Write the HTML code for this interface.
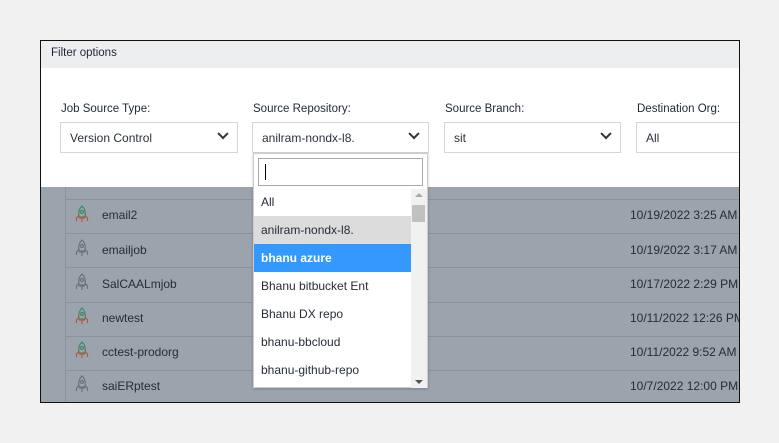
<!DOCTYPE html>
<html><head><style>
*{margin:0;padding:0;box-sizing:border-box}
body{width:779px;height:443px;background:#f1f1f1;font-family:"Liberation Sans",sans-serif;position:relative;overflow:hidden;color:#2b2f3a}
.frame{position:absolute;left:40px;top:40px;width:700px;height:363px;border:1px solid #111;background:#fff;overflow:hidden}
.hdr{position:absolute;left:0;top:0;width:698px;height:27px;background:#eceef0;font-size:11.5px;padding:6px 10px;color:#1f2736}
.ov{position:absolute;left:0;top:146px;width:698px;height:216px;background:#9ba3ad}
.vl{position:absolute;left:24px;top:146px;width:1px;height:216px;background:#8a929c}
.hl{position:absolute;left:25px;width:680px;height:1px;background:#8a929c}
.row{position:absolute;font-size:12px;color:#252c3a}
.lbl{position:absolute;top:62px;font-size:11.5px;color:#1f2736}
.sel{position:absolute;top:81px;height:31px;border:1px solid #d3d6da;background:#fff;font-size:12px;padding:8px 9px;color:#2b3240}
.chev{position:absolute;right:10px;top:11px;width:8px;height:8px;border-right:2px solid #333;border-bottom:2px solid #333;transform:rotate(45deg) translate(-3px,-3px)}
.dd{position:absolute;left:212px;top:112px;width:175px;height:235px;background:#fff;border:1px solid #ccc;box-shadow:0 1px 3px rgba(0,0,0,.2)}
.srch{position:absolute;left:4px;top:4px;width:165px;height:28px;border:1px solid #aaa}
.it{position:absolute;left:0;width:157px;height:28px;font-size:12px;padding:7px 7px;color:#252c3a}
.sb{position:absolute;right:0;top:35px;width:16px;height:199px;background:#f1f1f1}
</style></head><body>
<div class="frame">
<div class="hdr">Filter options</div>
<div class="lbl" style="left:20px">Job Source Type:</div>
<div class="lbl" style="left:212px">Source Repository:</div>
<div class="lbl" style="left:404px">Source Branch:</div>
<div class="lbl" style="left:596px">Destination Org:</div>
<div class="sel" style="left:19px;width:178px">Version Control<span class="chev"></span></div>
<div class="sel" style="left:211px;width:177px">anilram-nondx-l8.<span class="chev"></span></div>
<div class="sel" style="left:403px;width:177px">sit<span class="chev"></span></div>
<div class="sel" style="left:595px;width:120px">All</div>
<div class="ov"></div>
<div class="vl"></div>
<div class="hl" style="top:158px"></div><div class="hl" style="top:192px"></div><div class="hl" style="top:226px"></div><div class="hl" style="top:261px"></div><div class="hl" style="top:295px"></div><div class="hl" style="top:329px"></div>
<svg style="position:absolute;left:34px;top:164px" width="14" height="200" viewBox="0 0 14 200">
<g fill="none" stroke-width="1.2">
<g transform="translate(0,0)"><path d="M7 1C3.5 4 3.5 9 4 12H10C10.5 9 10.5 4 7 1Z" stroke="#3d8a6a"/><circle cx="7" cy="7" r="1.5" stroke="#3d8a6a"/><path d="M4 10L1.5 13V16M10 10L12.5 13V16M7 13V17M4 13H10" stroke="#c0553a"/></g>
<g transform="translate(0,34)"><path d="M7 1C3.5 4 3.5 9 4 12H10C10.5 9 10.5 4 7 1Z" stroke="#6a727c"/><circle cx="7" cy="7" r="1.5" stroke="#6a727c"/><path d="M4 10L1.5 13V16M10 10L12.5 13V16M7 13V17M4 13H10" stroke="#6a727c"/></g>
<g transform="translate(0,68)"><path d="M7 1C3.5 4 3.5 9 4 12H10C10.5 9 10.5 4 7 1Z" stroke="#6a727c"/><circle cx="7" cy="7" r="1.5" stroke="#6a727c"/><path d="M4 10L1.5 13V16M10 10L12.5 13V16M7 13V17M4 13H10" stroke="#6a727c"/></g>
<g transform="translate(0,102)"><path d="M7 1C3.5 4 3.5 9 4 12H10C10.5 9 10.5 4 7 1Z" stroke="#3d8a6a"/><circle cx="7" cy="7" r="1.5" stroke="#3d8a6a"/><path d="M4 10L1.5 13V16M10 10L12.5 13V16M7 13V17M4 13H10" stroke="#c0553a"/></g>
<g transform="translate(0,136)"><path d="M7 1C3.5 4 3.5 9 4 12H10C10.5 9 10.5 4 7 1Z" stroke="#3d8a6a"/><circle cx="7" cy="7" r="1.5" stroke="#3d8a6a"/><path d="M4 10L1.5 13V16M10 10L12.5 13V16M7 13V17M4 13H10" stroke="#c0553a"/></g>
<g transform="translate(0,170)"><path d="M7 1C3.5 4 3.5 9 4 12H10C10.5 9 10.5 4 7 1Z" stroke="#6a727c"/><circle cx="7" cy="7" r="1.5" stroke="#6a727c"/><path d="M4 10L1.5 13V16M10 10L12.5 13V16M7 13V17M4 13H10" stroke="#6a727c"/></g>
</g></svg>
<div class="row" style="left:61px;top:167px">email2</div>
<div class="row" style="left:61px;top:202px">emailjob</div>
<div class="row" style="left:61px;top:236px">SalCAALmjob</div>
<div class="row" style="left:61px;top:270px">newtest</div>
<div class="row" style="left:61px;top:304px">cctest-prodorg</div>
<div class="row" style="left:61px;top:338px">saiERptest</div>
<div class="row" style="left:589px;top:167px;white-space:nowrap">10/19/2022 3:25 AM</div>
<div class="row" style="left:589px;top:202px;white-space:nowrap">10/19/2022 3:17 AM</div>
<div class="row" style="left:589px;top:236px;white-space:nowrap">10/17/2022 2:29 PM</div>
<div class="row" style="left:589px;top:270px;white-space:nowrap">10/11/2022 12:26 PM</div>
<div class="row" style="left:589px;top:304px;white-space:nowrap">10/11/2022 9:52 AM</div>
<div class="row" style="left:589px;top:338px;white-space:nowrap">10/7/2022 12:00 PM</div>
<div class="dd">
<div class="srch"><div style="position:absolute;left:6px;top:5px;width:1px;height:16px;background:#000"></div></div>
<div class="it" style="top:34px">All</div>
<div class="it" style="top:62px;background:#dcdcdc">anilram-nondx-l8.</div>
<div class="it" style="top:90px;background:#3399ff;color:#fff;font-weight:bold">bhanu azure</div>
<div class="it" style="top:118px">Bhanu bitbucket Ent</div>
<div class="it" style="top:146px">Bhanu DX repo</div>
<div class="it" style="top:174px">bhanu-bbcloud</div>
<div class="it" style="top:202px">bhanu-github-repo</div>
<div class="sb"><div style="position:absolute;left:4px;top:4px;border:4px solid transparent;border-bottom-color:#aaa;border-top:0"></div><div style="position:absolute;left:1px;top:16px;width:13px;height:17px;background:#c1c1c1"></div><div style="position:absolute;left:4px;bottom:4px;border:4px solid transparent;border-top-color:#555;border-bottom:0"></div></div>
</div>
</div>
</body></html>
